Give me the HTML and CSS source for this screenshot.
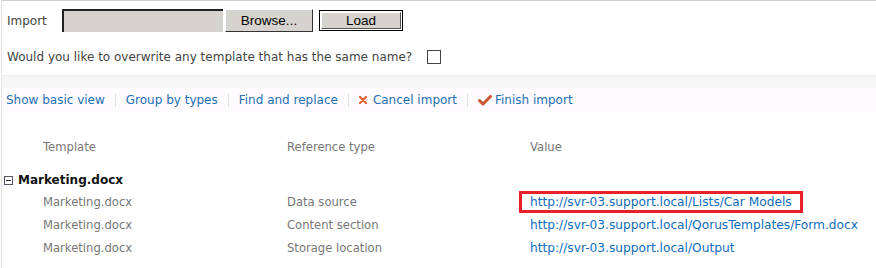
FILE: index.html
```html
<!DOCTYPE html>
<html lang="en">
<head>
    <meta charset="UTF-8">
    <title>Import templates</title>
    <link rel="stylesheet" href="styles.css">
</head>
<body>
    <div class="page">
        <div class="import-row">
            <span class="label">Import</span>
            <span class="file-input">
                <span class="file-path"></span>
                <span class="browse-btn">Browse...</span>
            </span>
            <span class="load-btn"><span>Load</span></span>
        </div>

        <div class="overwrite-row">
            <span class="label">Would you like to overwrite any template that has the same name?</span>
            <span class="checkbox"></span>
        </div>

        <div class="band"></div>

        <div class="toolbar">
            <a class="tool">Show basic view</a>
            <span class="sep"></span>
            <a class="tool">Group by types</a>
            <span class="sep"></span>
            <a class="tool">Find and replace</a>
            <span class="sep"></span>
            <a class="tool cancel">
                <svg width="8" height="8" viewBox="0 0 8 8">
                    <path d="M1 1 L7 7 M7 1 L1 7" stroke="#e4602c" stroke-width="2.2" stroke-linecap="round"/>
                </svg>
                Cancel import
            </a>
            <span class="sep"></span>
            <a class="tool finish">
                <svg width="14" height="11" viewBox="0 0 14 11">
                    <path d="M1.5 5.5 L5 9 L12.5 1.5" fill="none" stroke="#c9562e" stroke-width="3" stroke-linejoin="round" stroke-linecap="round"/>
                </svg>
                Finish import
            </a>
        </div>

        <div class="refs">
            <div class="row head">
                <span class="cell">Template</span>
                <span class="cell">Reference type</span>
                <span class="cell">Value</span>
            </div>

            <div class="group">
                <span class="toggle"></span>
                <span class="group-name">Marketing.docx</span>
            </div>

            <div class="row">
                <span class="cell">Marketing.docx</span>
                <span class="cell">Data source</span>
                <span class="cell"><a class="value marked">http://svr-03.support.local/Lists/Car Models</a></span>
            </div>
            <div class="row">
                <span class="cell">Marketing.docx</span>
                <span class="cell">Content section</span>
                <span class="cell"><a class="value">http://svr-03.support.local/QorusTemplates/Form.docx</a></span>
            </div>
            <div class="row">
                <span class="cell">Marketing.docx</span>
                <span class="cell">Storage location</span>
                <span class="cell"><a class="value">http://svr-03.support.local/Output</a></span>
            </div>
        </div>
    </div>
</body>
</html>
```

FILE: styles.css
```css
body {
    margin: 0;
    font-family: "DejaVu Sans", Verdana, sans-serif;
    background: #fff;
}

.page {
    height: 268px;
    margin-left: 1px;
    border-top: 1px solid #cfcfcf;
    border-left: 1px solid #e4e4e4;
    box-sizing: border-box;
}

.label {
    font-size: 12px;
    color: #444;
}

/* Import row */
.import-row {
    display: flex;
    align-items: center;
    height: 23px;
    margin-top: 8px;
    padding-left: 5px;
}

.import-row .label {
    width: 55px;
}

.file-input {
    display: flex;
    height: 23px;
}

.file-path {
    width: 159px;
    background: #d6d3ce;
    border-top: 2px solid #222;
    border-left: 2px solid #222;
}

.browse-btn {
    width: 86px;
    margin-left: 2px;
    display: flex;
    align-items: center;
    justify-content: center;
    background: #d6d3ce;
    border: 1px solid;
    border-color: #fff #333 #333 #fff;
    font-family: "Liberation Sans", Arial, sans-serif;
    font-size: 13.5px;
    color: #000;
}

.load-btn {
    width: 84px;
    height: 21px;
    margin-left: 6px;
    box-sizing: border-box;
    border: 1px solid #000;
    padding: 1px;
    display: flex;
}

.load-btn span {
    flex: 1;
    display: flex;
    align-items: center;
    justify-content: center;
    background: #d6d3ce;
    border: 1px solid;
    border-color: #fff #555 #555 #fff;
    font-family: "Liberation Sans", Arial, sans-serif;
    font-size: 13.5px;
    color: #000;
}

/* Overwrite question */
.overwrite-row {
    display: flex;
    align-items: center;
    height: 14px;
    margin-top: 18px;
    padding-left: 5px;
}

.checkbox {
    width: 12px;
    height: 12px;
    margin-left: 15px;
    border: 1px solid #444;
    background: #fff;
}

.band {
    height: 12px;
    margin-top: 11px;
    border-top: 1px solid #ececec;
    background: #f6f6f6;
}

/* Toolbar */
.toolbar {
    display: flex;
    align-items: center;
    height: 24px;
    padding-left: 4px;
    background: #fdfbfd;
    font-size: 12px;
}

.tool {
    color: #1f6fb5;
    display: flex;
    align-items: center;
    cursor: pointer;
}

.cancel {
    gap: 6px;
}

.finish {
    gap: 3px;
}

.sep {
    width: 1px;
    height: 13px;
    margin: 0 10px;
    background: #e6dde3;
}

/* References */
.refs {
    margin-top: 24px;
    font-size: 11.6px;
}

.row {
    display: grid;
    grid-template-columns: 244px 243px auto;
    padding-left: 41px;
    height: 22.7px;
    align-items: center;
    color: #777;
}

.row.head {
    height: 22px;
    margin-bottom: 11px;
}

.group {
    display: flex;
    align-items: center;
    height: 22px;
    padding-left: 2px;
}

.toggle {
    width: 7px;
    height: 7px;
    border: 1px solid #556;
    position: relative;
    margin-right: 5px;
}

.toggle::after {
    content: "";
    position: absolute;
    left: 1px;
    right: 1px;
    top: 3px;
    height: 1px;
    background: #223;
}

.group-name {
    font-weight: bold;
    color: #111;
    font-size: 12px;
}

.value {
    color: #0f6cbd;
    font-size: 12.2px;
}

.value.marked {
    display: inline-block;
    margin-left: -11px;
    padding: 1px 8px;
    border: 3px solid #e8202a;
}
```
